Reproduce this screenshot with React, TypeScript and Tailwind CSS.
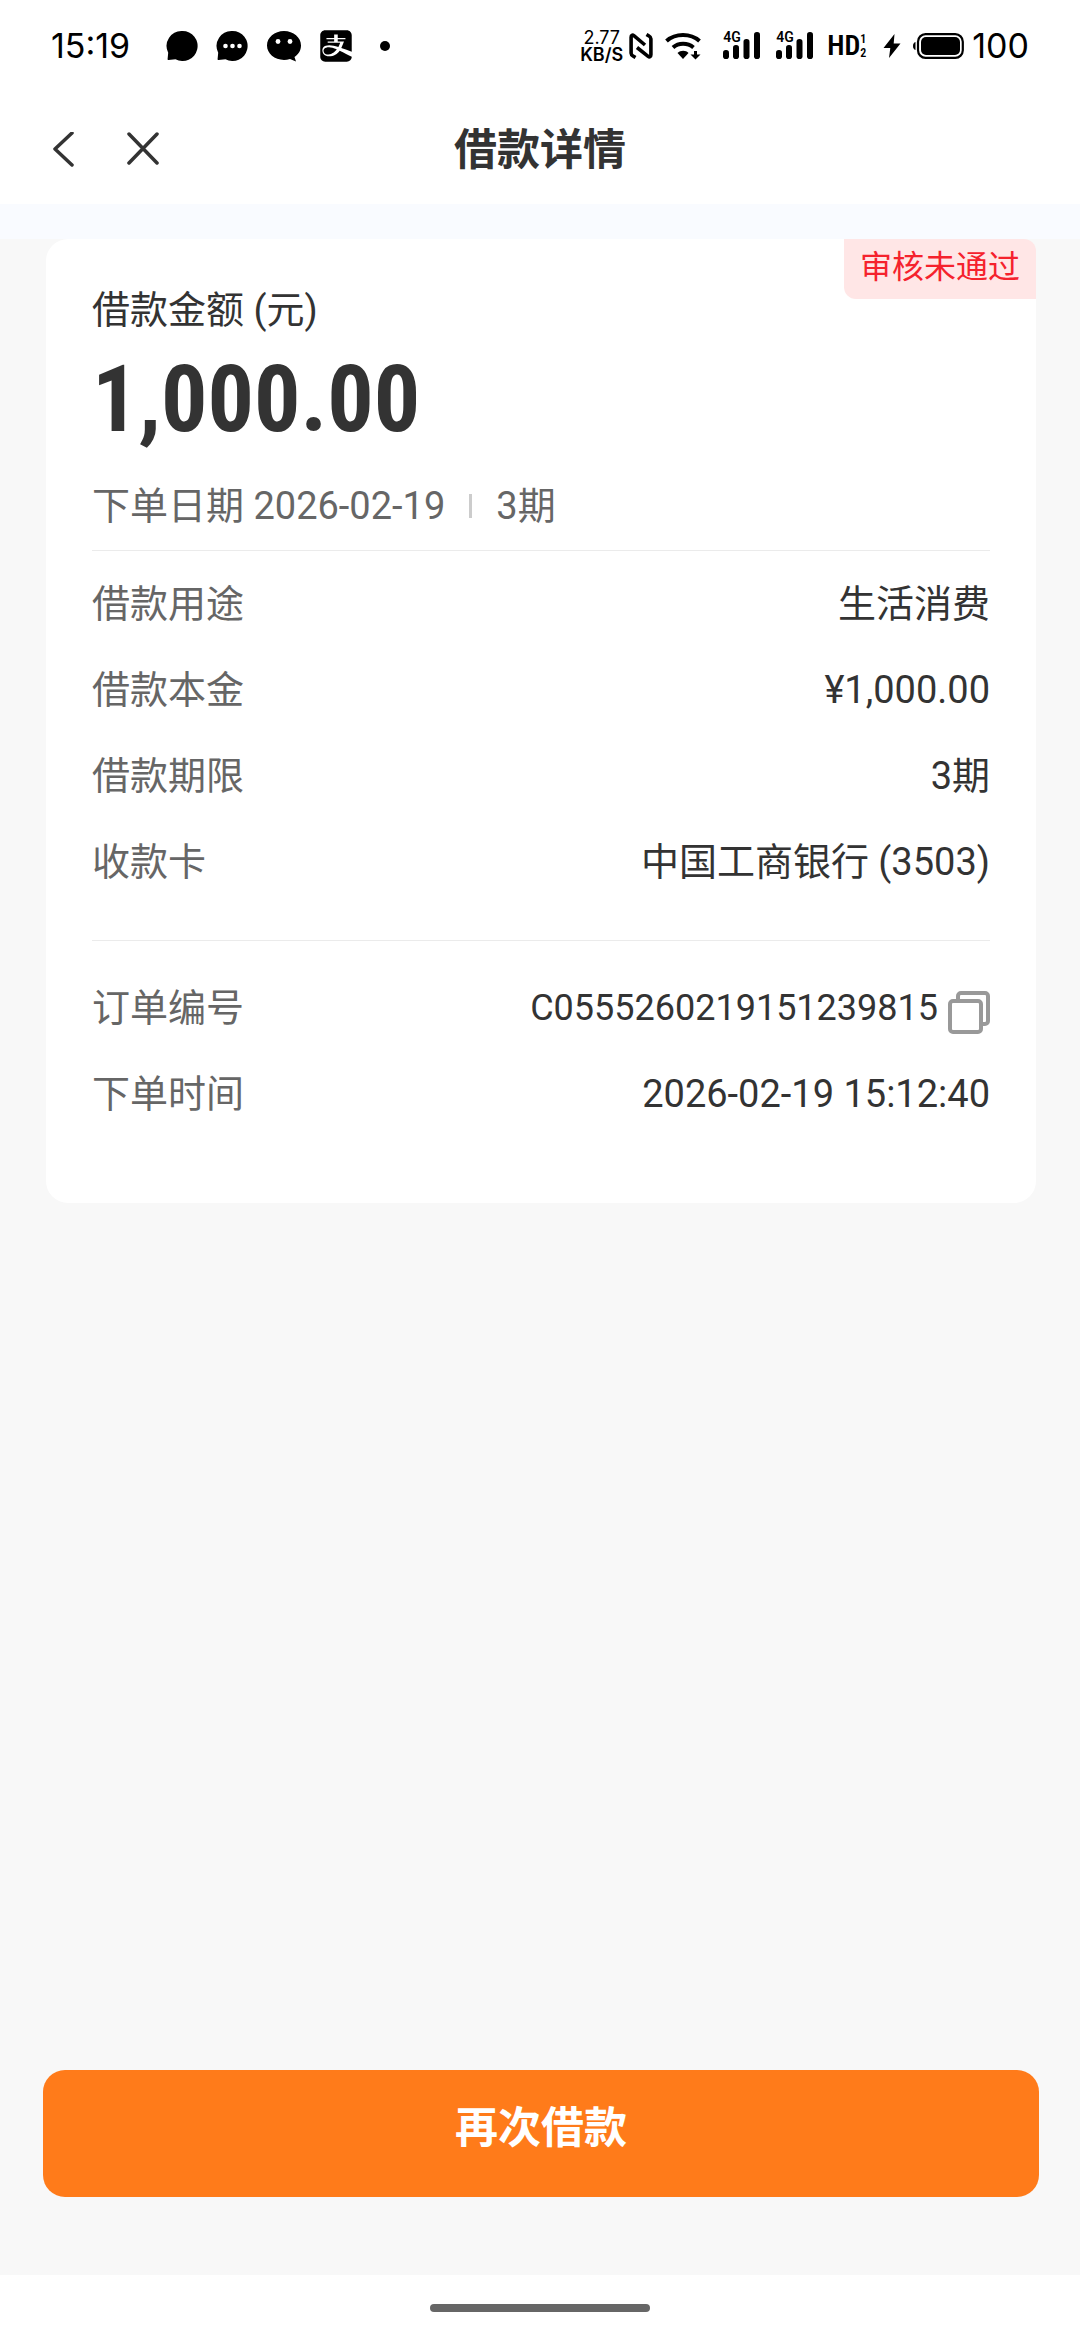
import { type FC, type ReactNode } from "react";
import { FaAlipay } from "react-icons/fa6";

const loanRows = [
    { id: 1, label: "借款用途", value: "生活消费" },
    { id: 2, label: "借款本金", value: "¥1,000.00" },
    { id: 3, label: "借款期限", value: "3期" },
    { id: 4, label: "收款卡", value: "中国工商银行 (3503)" },
];

const order = {
    number: "C0555260219151239815",
    time: "2026-02-19 15:12:40",
};

const ChatIcon: FC<{ dots?: boolean }> = ({ dots }) => (
    <svg className="w-8 h-8" viewBox="0 0 32 32" aria-hidden="true">
        <path d="M16.500 1a15 15 0 1 1-7 28.200L2.500 30c-.8 0-1-.5-.9-1.100l.6-6.200A15 15 0 0 1 16.500 1z" fill="#000" />
        {dots && (
            <g fill="#fff">
                <circle cx="9.500" cy="16" r="2.300" />
                <circle cx="16.500" cy="16" r="2.300" />
                <circle cx="23.500" cy="16" r="2.300" />
            </g>
        )}
    </svg>
);

const WechatIcon: FC = () => (
    <svg className="w-9 h-8" viewBox="0 0 36 32" aria-hidden="true">
        <path d="M18 1c9.500 0 17 6.500 17 14.500 0 5-2.700 9-6.500 11.500l1.500 4.500-6-2.500c-2 .6-4 .9-6 .9C8.500 29.900 1 23.500 1 15.500S8.500 1 18 1z" fill="#000" />
        <circle cx="12" cy="11.500" r="2.400" fill="#fff" />
        <circle cx="24" cy="11.500" r="2.400" fill="#fff" />
    </svg>
);

const NfcIcon: FC = () => (
    <svg className="w-6 h-[26px]" viewBox="0 0 24 26" fill="none" stroke="#000" strokeWidth="3.600" aria-hidden="true">
        <path d="M6.500 24.500l-2-1.200c-1.400-.8-2.400-1.300-2.400-3V4.200c0-2 1.400-2.600 2.800-1.600L16 12" />
        <path d="M17.500 1.500l2 1.200c1.400.8 2.400 1.300 2.400 3v16.100c0 2-1.400 2.600-2.800 1.600L8 14.500" />
    </svg>
);

const WifiIcon: FC = () => (
    <svg className="w-9 h-7" viewBox="0 0 36 28" fill="none" aria-hidden="true">
        <path d="M1.500 9c9-8 24-8 33 0" stroke="#000" strokeWidth="4" />
        <path d="M8 15.500c5.500-5 14.500-5 20.500 0" stroke="#000" strokeWidth="4" />
        <path d="M12.500 21c3-3 8.500-3 11 0L18 27z" fill="#000" />
        <path d="M30.500 19v5" stroke="#000" strokeWidth="3" />
        <path d="M25.500 22.500h10l-5 5z" fill="#000" />
    </svg>
);

const SignalIcon: FC = () => (
    <div className="relative w-[37px] h-7">
        <svg className="w-[37px] h-7" viewBox="0 0 37 28" aria-hidden="true">
            <rect x="0" y="18" width="6" height="9" rx="2.800" />
            <rect x="10" y="13" width="6" height="14" rx="2.800" />
            <rect x="20.500" y="7" width="6" height="20" rx="2.800" />
            <rect x="31" y="0" width="6" height="27" rx="2.800" />
        </svg>
        <span className="absolute left-0 top-0 font-[Roboto] text-[14px] leading-[10px] font-semibold">4G</span>
    </div>
);

const BoltIcon: FC = () => (
    <svg className="w-[18px] h-[26px]" viewBox="0 0 18 26" aria-hidden="true">
        <path d="M11.500 1L.5 15h6.800L6 25 17.500 10.500h-6.800z" fill="#000" />
    </svg>
);

const BatteryIcon: FC = () => (
    <svg className="w-[51px] h-[26px]" viewBox="0 0 51 26" aria-hidden="true">
        <path d="M2.500 9v8C.8 16.500 0 15 0 13s.8-3.500 2.500-4z" />
        <rect x="5" y="1.200" width="44.800" height="23.600" rx="7.500" fill="none" stroke="#000" strokeWidth="2.200" />
        <rect x="8" y="4" width="39" height="18" rx="5" />
    </svg>
);

const StatusBar: FC = () => (
    <div className="h-[92px] flex justify-between items-center px-[51px] bg-white text-black">
        <div className="flex items-center">
            <span className="w-[115px] font-[Inter] text-[34px] leading-10">15:19</span>
            <div className="flex items-center gap-[18px]">
                <ChatIcon />
                <ChatIcon dots />
                <WechatIcon />
                <FaAlipay className="w-8 h-9" />
                <span className="w-[10px] h-[10px] ml-[10px] rounded-full bg-black" />
            </div>
        </div>
        <div className="flex items-center font-[Inter]">
            <div className="flex flex-col items-center text-[18px] leading-[17px]">
                <span>2.77</span>
                <span className="font-semibold">KB/S</span>
            </div>
            <div className="ml-[6px]"><NfcIcon /></div>
            <div className="ml-3"><WifiIcon /></div>
            <div className="ml-[22px]"><SignalIcon /></div>
            <div className="ml-4"><SignalIcon /></div>
            <div className="w-10 flex items-center ml-[14px] font-['Roboto_Condensed',Roboto] font-semibold">
                <span className="text-[28px] leading-8">HD</span>
                <span className="flex flex-col text-[12px] leading-[14px]">
                    <span>1</span>
                    <span>2</span>
                </span>
            </div>
            <div className="ml-4"><BoltIcon /></div>
            <div className="ml-3"><BatteryIcon /></div>
            <span className="ml-2 text-[34px] leading-10">100</span>
        </div>
    </div>
);

const Header: FC = () => (
    <header className="h-[112px] pt-1 grid grid-cols-3 items-center bg-white">
        <div className="flex items-center pl-[43px] gap-[35px]">
            <button aria-label="返回" className="w-10 h-10 flex justify-center items-center cursor-pointer">
                <svg className="w-6 h-9" viewBox="0 0 24 36" fill="none" stroke="#333" strokeWidth="3.500" strokeLinecap="round" strokeLinejoin="round">
                    <path d="M21 1L4 17l17 16" />
                </svg>
            </button>
            <button aria-label="关闭" className="w-[50px] h-10 flex justify-center items-center cursor-pointer">
                <svg className="w-9 h-9" viewBox="0 0 36 36" fill="none" stroke="#333" strokeWidth="3.500" strokeLinecap="round">
                    <path d="M4 2l28 29M32 2L4 31" />
                </svg>
            </button>
        </div>
        <h1 className="text-center text-[43px] leading-[60px] font-bold">借款详情</h1>
    </header>
);

const InfoRow: FC<{ label: string; children: ReactNode }> = ({ label, children }) => (
    <div className="h-[86px] flex justify-between items-center">
        <dt className="text-[#666]">{label}</dt>
        <dd className="flex items-center">{children}</dd>
    </div>
);

const App: FC = () => {
    const handleCopy = () => {
        navigator.clipboard?.writeText(order.number);
    };

    return (
        <div className="min-h-screen flex flex-col bg-[#f8f8f8] text-[#333] font-[Roboto,'Noto_Sans_CJK_SC',sans-serif]">
            <StatusBar />
            <Header />
            <div className="h-[35px] bg-[#f9fbff]" />
            <main className="flex-1 flex flex-col justify-between">
                <section className="relative ml-[46px] mr-[44px] px-[46px] pt-[43px] pb-[66px] bg-white rounded-[22px] text-[38px] leading-[56px]">
                    <span className="absolute right-0 top-0 h-[60px] px-4 rounded-tr-[12px] rounded-bl-[12px] bg-[#ffe6e6] text-[#f5222d] text-[32px] leading-[56px]">
                        审核未通过
                    </span>
                    <p>借款金额 (元)</p>
                    <p className="font-['Roboto_Condensed',Roboto] text-[92px] leading-[124px] font-bold">1,000.00</p>
                    <div className="flex items-center h-[89px] border-b border-[#ebebeb] text-[#666]">
                        <span>下单日期 2026-02-19</span>
                        <span className="w-[3px] h-6 mx-6 bg-[#ccc]" />
                        <span>3期</span>
                    </div>
                    <dl className="pt-[10px] pb-[35px] border-b border-[#ebebeb]">
                        {loanRows.map((row) => (
                            <InfoRow key={row.id} label={row.label}>{row.value}</InfoRow>
                        ))}
                    </dl>
                    <dl className="pt-6">
                        <InfoRow label="订单编号">
                            <span className="text-[36px]">{order.number}</span>
                            <button aria-label="复制" className="ml-[10px] mt-2 cursor-pointer" onClick={handleCopy}>
                                <svg className="w-[42px] h-11" viewBox="1 0 42 44" fill="none" stroke="#999" strokeWidth="4" strokeLinejoin="round">
                                    <rect x="3" y="11" width="31" height="31" rx="3" />
                                    <path d="M11 11V6a3 3 0 0 1 3-3h24a3 3 0 0 1 3 3v25a3 3 0 0 1-3 3h-4" />
                                </svg>
                            </button>
                        </InfoRow>
                        <InfoRow label="下单时间">{order.time}</InfoRow>
                    </dl>
                </section>
                <div className="pl-[43px] pr-[41px] pb-[78px]">
                    <button className="w-full h-[127px] pb-3 rounded-[22px] bg-[#ff7b1a] text-white text-[43px] leading-[60px] font-bold cursor-pointer">
                        再次借款
                    </button>
                </div>
            </main>
            <footer className="h-[65px] flex justify-center items-center bg-white">
                <span className="w-[220px] h-2 rounded-full bg-[#666]" />
            </footer>
        </div>
    );
};

export default App;
